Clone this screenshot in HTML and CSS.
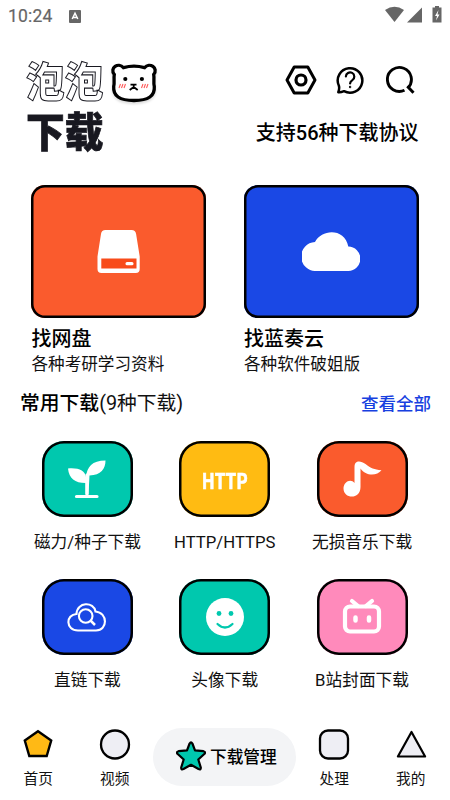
FILE: index.html
```html
<!DOCTYPE html>
<html lang="zh-CN">
<head>
<meta charset="utf-8">
<title>泡泡下载</title>
<link rel="stylesheet" href="styles.css">
</head>
<body>
<div class="status">
  <span class="time">10:24</span>
  <svg class="app-badge" width="12" height="13" viewBox="0 0 12 13"><rect width="12" height="13" rx="1" fill="#666"/><path d="M3.200 9 6 3.200 8.800 9M4.300 7.400h3.400" fill="none" stroke="#fff" stroke-width="1.500"/></svg>
  <svg class="signals" width="57" height="18" viewBox="0 0 57 18"><path d="M0 4Q9.500-2.500 19 4L9.500 16Z" fill="#666"/><path d="M37 1.500V16.500H22Z" fill="#666"/><path d="M50 0h4v1.500h2.500v15h-9v-15H50Z" fill="#666"/><path d="M53.500 4 50 10h2l-1 4.500 3.500-6h-2Z" fill="#fff"/></svg>
</div>
<header class="header">
  <div class="brand">
    <div class="brand-line"><span class="outline">泡泡</span>
      <svg class="bear" width="48" height="44" viewBox="0 0 48 44"><path d="M13.500 5.700C8.500-.2-.8 6 4.300 12.500 3.500 17 4.800 20 3.700 24.500 3 33.800 9.500 38.500 24 38.500S45 33.800 44.300 24.500C43.200 20 44.500 17 43.700 12.500 48.800 6 39.500-.2 34.500 5.700 28 3.800 20 3.800 13.500 5.700Z" fill="#fff" stroke="#000" stroke-width="3.300"/><circle cx="15.300" cy="17" r="2.100"/><circle cx="31.900" cy="17" r="2.100"/><path d="M20.500 22.700h6M23.700 23v2l-4 3M23.700 25l4 3" fill="none" stroke="#000" stroke-width="1.800"/><path d="M10.500 22 9 26M13 22l-1.500 4M15.500 22 14 26M33 22l-1.500 4M35.500 22 34 26M38 22l-1.500 4" stroke="#ff5a5a" stroke-width="1.100"/></svg>
    </div>
    <div class="solid">下载</div>
  </div>
  <div class="header-side">
    <div class="actions">
      <svg width="32" height="30" viewBox="0 0 32 30" fill="none" stroke="#000" stroke-linejoin="round"><path d="M9.200 2h13.600L30 15l-7.200 13H9.200L2 15Z" stroke-width="3"/><circle cx="16" cy="15" r="5" stroke-width="3.200"/></svg>
      <svg width="28" height="30" viewBox="0 0 28 30" fill="none" stroke="#000" stroke-linecap="round" stroke-linejoin="round"><path d="M2.800 20.500A12.300 12.300 0 1 1 8 26.200C6 27 4 27.500 2.300 27.200 3.300 24.500 3.500 22.500 2.800 20.500Z" stroke-width="2.500"/><path d="M9.900 11.500a4.200 4.200 0 1 1 6.500 3.600C14.700 16.200 14.100 17 14.100 18.500" stroke-width="2.200"/><circle cx="14.100" cy="22" r=".4" stroke-width="1.600"/></svg>
      <svg width="30" height="30" viewBox="0 0 30 30" fill="none" stroke="#000"><path d="M18.500 25.300A12 12 0 1 1 22 22.800" stroke-width="2.900"/><path d="m21.300 21.300 6.200 6.500" stroke-width="3"/></svg>
    </div>
    <div class="slogan">支持56种下载协议</div>
  </div>
</header>
<section class="features">
  <article>
    <div class="feature-card orange"><svg width="43" height="43" viewBox="0 0 43 43"><path d="M8.500 0h26q4 0 4.600 4l3.600 22.500V39q0 4-4 4H4.500q-4 0-4-4V26.500L4 4Q4.500 0 8.500 0Z" fill="#fff"/><path d="M4.300 28.500h35.200v10H4.300Z" fill="#f84b1a"/><rect x="28.500" y="32" width="8" height="3.200" rx="1.500" fill="#fff"/></svg></div>
    <h2>找网盘</h2><p>各种考研学习资料</p>
  </article>
  <article>
    <div class="feature-card blue"><svg width="58" height="39" viewBox="0 0 58 39"><path d="M14.400 39A14.500 14.500 0 0 1 13 10C20-3.500 43-4 46.300 14.600A12.200 12.200 0 0 1 46 39Z" fill="#fff"/></svg></div>
    <h2>找蓝奏云</h2><p>各种软件破姐版</p>
  </article>
</section>
<div class="section-head"><div><b>常用下载</b>(9种下载)</div><a>查看全部</a></div>
<section class="tools">
  <div class="tool"><div class="tile green"><svg width="40" height="40" viewBox="0 0 40 40"><path d="M1 9.500C12 8.500 18 12 19 18 20 8 25 1.500 38.500 1.500 38.500 10 34 16 22.500 16.500L21.500 35H18.500V24C8 24 2 19.500 1 9.500Z" fill="#fff"/><path d="M20 16v20M9.500 37.500h20.500" stroke="#fff" stroke-width="3.200" stroke-linecap="round"/></svg></div><span>磁力/种子下载</span></div>
  <div class="tool"><div class="tile yellow"><strong>HTTP</strong></div><span>HTTP/HTTPS</span></div>
  <div class="tool"><div class="tile red"><svg width="40" height="40" viewBox="0 0 40 40"><path d="M12.500 24V8C12.500 1.500 18 1 23.500 5 29 9.500 32 10.500 39.500 11.200 35 17 24 17.500 18.500 9.500V28C18.500 41 1.500 40 1.500 29.500 1.500 22.500 9 19 12.500 24Z" fill="#fff"/></svg></div><span>无损音乐下载</span></div>
  <div class="tool"><div class="tile blue"><svg class="cloud-search" width="40" height="30" viewBox="0 0 40 30" fill="none" stroke="#fff" stroke-width="2.100"><path d="M11 27.500C-1.500 27.500-1.500 11.500 9.500 11 10-1.500 27-1.500 28.500 8.500 41 9.500 41 27.500 29 27.500Z"/><circle cx="18.700" cy="13" r="6.800"/><path d="m23.500 17.500 4.500 4.500" stroke-width="2.500"/></svg></div><span>直链下载</span></div>
  <div class="tool"><div class="tile green"><svg width="40" height="40" viewBox="0 0 40 40"><circle cx="20" cy="20" r="19" fill="#fff"/><circle cx="14" cy="16.500" r="2.400" fill="#00c8ae"/><circle cx="26" cy="16.500" r="2.400" fill="#00c8ae"/><path d="M12.500 27Q20 34 27.500 27" fill="none" stroke="#00c8ae" stroke-width="2.200" stroke-linecap="round"/></svg></div><span>头像下载</span></div>
  <div class="tool"><div class="tile pink"><svg width="40" height="40" viewBox="0 0 40 40" fill="none" stroke="#fff" stroke-linecap="round"><rect x="3" y="9.500" width="34" height="25" rx="5" stroke-width="4.200"/><path d="m10 4 6 5M30 4l-6 5" stroke-width="4.200"/><path d="M13.500 20.500v3M27 20.500v3" stroke-width="4.500"/></svg></div><span>B站封面下载</span></div>
</section>
<nav class="nav">
  <a class="nav-item"><svg width="32" height="32" viewBox="0 0 32 32"><path d="M16 3.300 29.200 12.600 24.700 28H7.300L2.800 12.600Z" fill="#ffb915" stroke="#000" stroke-width="2.400"/></svg><span>首页</span></a>
  <a class="nav-item"><svg width="32" height="32" viewBox="0 0 32 32"><circle cx="16" cy="16.500" r="14" fill="#eeeef4" stroke="#000" stroke-width="2.300"/></svg><span>视频</span></a>
  <a class="manage"><svg width="30" height="30" viewBox="0 0 30 30"><path d="M13.600 2.500Q15 .2 16.400 2.500L19 9.300 27.500 10.200Q30.200 11 28.300 13L22.300 18.500 24.800 26.500Q25 29.200 22.500 28L15 23.800 7.500 28Q5 29.200 5.200 26.500L7.700 18.500 1.700 13Q-.2 11 2.500 10.200L11 9.300Z" fill="#00c8ae" stroke="#000" stroke-width="2.200" stroke-linejoin="round"/></svg><span>下载管理</span></a>
  <a class="nav-item"><svg width="32" height="32" viewBox="0 0 32 32"><rect x="2" y="2.500" width="28" height="28" rx="8" fill="#eeeef4" stroke="#000" stroke-width="2.300"/></svg><span>处理</span></a>
  <a class="nav-item"><svg width="32" height="32" viewBox="0 0 32 32"><path d="M16.500 4 30.100 28.500H2.900Z" fill="#eeeef4" stroke="#000" stroke-width="2.200" stroke-linejoin="round"/></svg><span>我的</span></a>
</nav>
</body>
</html>
```

FILE: styles.css
```css
* { box-sizing: border-box; }
body { margin: 0; width: 450px; height: 800px; overflow: hidden; background: #fff; color: #111; font-family: Roboto, "Noto Sans CJK SC", sans-serif; }
svg { display: block; flex: none; }
h2, p { margin: 0; white-space: nowrap; }
.status { height: 32px; padding: 0 8px; display: flex; align-items: center; }
.time { font-size: 17.5px; letter-spacing: .2px; color: #666; width: 61px; -webkit-text-stroke: .2px #666; }
.signals { margin-left: auto; margin-top: -3px; }
.header { height: 153px; padding: 22px 31px 0 26px; display: flex; justify-content: space-between; }
.brand-line { display: flex; height: 50px; align-items: center; }
.outline, .solid { font: 900 38.700px/50px "Noto Sans CJK SC", sans-serif; transform: scaleY(1.06); }
.outline { color: transparent; -webkit-text-stroke: 1px #181820; }
.solid { color: #181820; -webkit-text-stroke: .7px #181820; }
.bear { margin: 10px 0 0 7px; filter: drop-shadow(0 2px 1px #0002); }
.header-side { display: flex; flex-direction: column; align-items: flex-end; padding-top: 3px; }
.actions { display: flex; gap: 20px; height: 46px; align-items: center; padding-right: 3px; }
.actions svg:nth-child(2) { margin: 0 2px 0 -1px; }
.slogan { font-size: 20px; line-height: 30px; font-weight: 500; margin-top: 15px; margin-right: .5px; color: #000; white-space: nowrap; }
.features { display: grid; grid-template-columns: 175px 175px; column-gap: 37.500px; padding-left: 31px; height: 200px; }
.feature-card { height: 133px; border-radius: 14px; box-shadow: inset 0 0 0 2.500px #000; display: flex; align-items: center; justify-content: center; }
.orange, .red { background: #fa5b2d; }
.blue { background: #1a48e5; }
.green { background: #00c8ae; }
.yellow { background: #ffbb12; }
.pink { background: #ff8abb; }
.features h2 { font-size: 20px; line-height: 28px; margin-top: 7px; font-weight: 500; padding-left: .5px; color: #000; }
.features p { font-size: 16.600px; line-height: 24px; padding-left: .5px; }
.section-head { height: 56px; padding: 5px 19px 0 20px; display: flex; justify-content: space-between; font-size: 19.800px; line-height: 28px; }
.section-head b { font-weight: 500; color: #000; }
.section-head a { font-size: 17.500px; color: #1740e0; font-weight: 500; }
.tools { display: grid; grid-template-columns: repeat(3, 137.300px); grid-auto-rows: 137.500px; padding-left: 18.800px; }
.tool { display: flex; flex-direction: column; align-items: center; font-size: 16.700px; line-height: 24px; white-space: nowrap; }
.tile { width: 91px; height: 76px; border-radius: 22px; box-shadow: inset 0 0 0 2.500px #000; display: flex; align-items: center; justify-content: center; margin-bottom: 14px; }
.tile strong { color: #fff; -webkit-text-stroke: .6px #fff; font: 700 21.500px "Noto Sans CJK SC", sans-serif; transform: scaleX(.8); }
.cloud-search { margin-top: 2px; }
.nav { height: 76px; margin-top: 12px; display: flex; align-items: flex-start; font-size: 14.700px; }
.nav-item { width: 76.500px; display: flex; flex-direction: column; align-items: center; line-height: 22px; }
.nav-item span { margin-top: 8px; }
.manage { width: 143px; height: 58px; border-radius: 29px; background: #f3f4f6; display: flex; align-items: center; padding-left: 23px; gap: 4px; font-size: 16.700px; font-weight: 500; color: #000; }
.manage svg { margin-top: -3px; }
.manage span { margin-top: -2px; }
```
